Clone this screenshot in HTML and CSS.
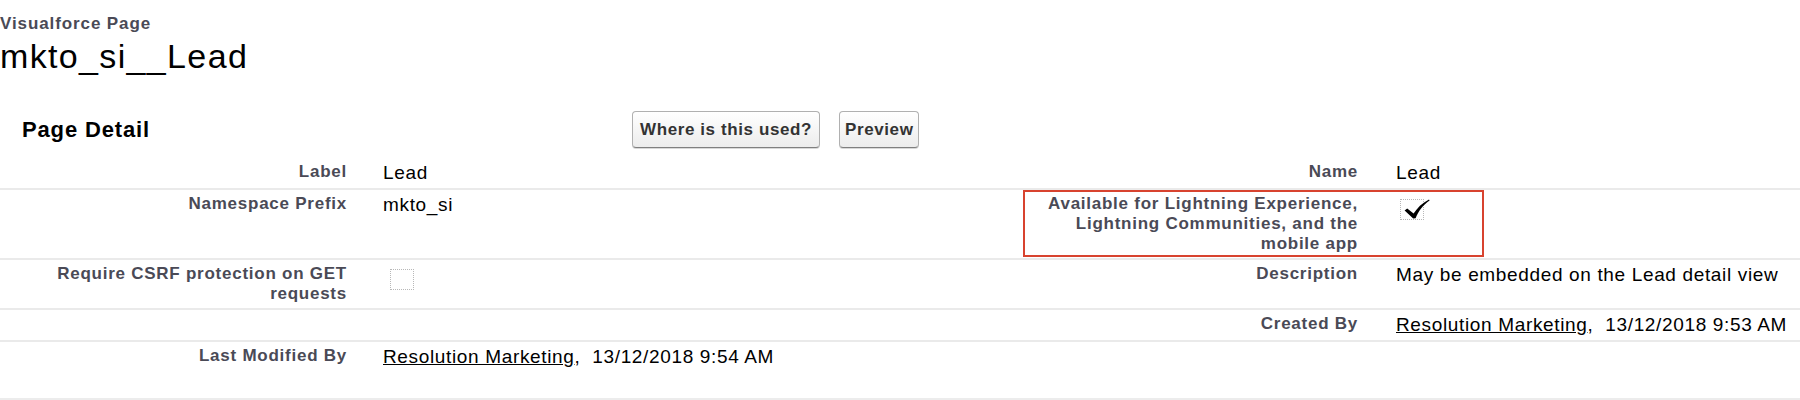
FILE: index.html
```html
<!DOCTYPE html>
<html lang="en">
<head>
<meta charset="utf-8">
<title>mkto_si__Lead ~ Visualforce Page</title>
<link rel="stylesheet" href="styles.css">
</head>
<body>
<header class="page-head">
  <div class="page-type">Visualforce Page</div>
  <h1 class="page-name">mkto_si__Lead</h1>
</header>

<section class="block">
  <div class="block-head">
    <h2 class="block-title">Page Detail</h2>
    <div class="block-buttons">
      <button class="btn" type="button">Where is this used?</button>
      <button class="btn btn-narrow" type="button">Preview</button>
    </div>
  </div>

  <div class="detail">
    <div class="lbl">Label</div>
    <div class="val">Lead</div>
    <div class="lbl">Name</div>
    <div class="val val-right">Lead</div>

    <div class="lbl">Namespace Prefix</div>
    <div class="val">mkto_si</div>
    <div class="lbl">Available for Lightning Experience, Lightning Communities, and the mobile app</div>
    <div class="val val-right">
      <span class="cb cb-checked">
        <svg class="check" viewBox="0 0 26 20" aria-hidden="true">
          <path d="M0.6 11.4 L3.2 9.4 L9.6 14.6 C13 9 18 4 25 0.4 L25.6 1.4 C19 6 14.2 12 11.6 19.2 L9.2 19.6 Z"/>
        </svg>
      </span>
    </div>

    <div class="lbl">Require CSRF protection on GET requests</div>
    <div class="val"><span class="cb"></span></div>
    <div class="lbl">Description</div>
    <div class="val val-right">May be embedded on the Lead detail view</div>

    <div class="lbl"></div>
    <div class="val"></div>
    <div class="lbl">Created By</div>
    <div class="val val-right"><a href="#" class="user">Resolution Marketing</a>,&nbsp; 13/12/2018 9:53 AM</div>

    <div class="lbl last">Last Modified By</div>
    <div class="val last"><a href="#" class="user">Resolution Marketing</a>,&nbsp; 13/12/2018 9:54 AM</div>
    <div class="lbl last"></div>
    <div class="val val-right last"></div>

    <div class="highlight" aria-hidden="true"></div>
  </div>
</section>
</body>
</html>
```

FILE: styles.css
```css
html, body {
  margin: 0;
  padding: 0;
  background: #ffffff;
}

body {
  font-family: "Liberation Sans", Arial, sans-serif;
  color: #000000;
}

.page-head {
  padding-top: 14px;
}

.page-type {
  font-size: 17px;
  line-height: 20px;
  font-weight: bold;
  letter-spacing: 0.9px;
  color: #4a4a56;
}

.page-name {
  margin: 3px 0 0 0;
  font-size: 34px;
  line-height: 38px;
  font-weight: normal;
  letter-spacing: 1.35px;
  color: #000000;
}

.block-head {
  display: flex;
  align-items: center;
  padding: 36px 0 10px 0;
}

.block-title {
  margin: 0;
  width: 610px;
  padding-left: 22px;
  font-size: 22px;
  font-weight: bold;
  letter-spacing: 0.85px;
  color: #000000;
}

.block-buttons {
  display: flex;
  gap: 19px;
}

.btn {
  height: 37px;
  padding: 0 7px;
  font-family: "Liberation Sans", Arial, sans-serif;
  font-size: 17px;
  font-weight: bold;
  letter-spacing: 0.6px;
  color: #333333;
  background: linear-gradient(#ffffff, #ececec);
  border: 1px solid #b0b0b0;
  border-bottom-color: #7f7f7f;
  border-radius: 4px;
  box-shadow: 0 1px 0 #d8d8d8;
}

.btn-narrow {
  padding: 0 5px;
}

.detail {
  position: relative;
  display: grid;
  grid-template-columns: 363px 667px 344px 1fr;
}

.lbl,
.val {
  border-bottom: 2px solid #eaeaea;
}

.lbl {
  padding: 4px 16px 4px 10px;
  text-align: right;
  font-size: 17px;
  line-height: 20px;
  font-weight: bold;
  letter-spacing: 0.75px;
  color: #4a4a56;
}

.val {
  padding: 4px 10px 4px 20px;
  font-size: 19px;
  line-height: 22px;
  letter-spacing: 0.65px;
  color: #000000;
}

.val-right {
  padding-left: 22px;
}

.last {
  padding-bottom: 30px;
  border-bottom: 3px solid #ececec;
}

.user {
  color: #000000;
  text-decoration: underline;
}

.cb {
  position: relative;
  display: block;
  width: 22px;
  height: 19px;
  margin: 5px 0 0 7px;
  border: 1px dotted #b8b8b8;
}

.cb-checked {
  margin-left: 4px;
}

.check {
  position: absolute;
  left: 3px;
  top: -1px;
  width: 26px;
  height: 20px;
  fill: #000000;
}

.highlight {
  position: absolute;
  left: 1023px;
  top: 32px;
  width: 457px;
  height: 63px;
  border: 2px solid #d8432f;
  pointer-events: none;
}
```
